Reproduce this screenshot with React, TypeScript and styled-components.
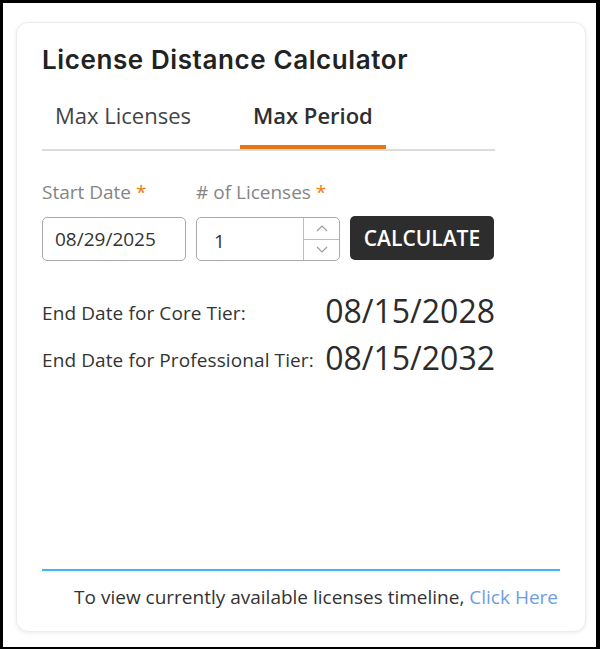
import React from "react";
import styled, { createGlobalStyle } from "styled-components";

const Global = createGlobalStyle`
  html, body { margin: 0; padding: 0; background: #fff; }
  body { font-family: "Open Sans", "Noto Sans", sans-serif; }
  * { box-sizing: border-box; }
`;

const Frame = styled.div`
  width: 600px;
  height: 649px;
  border-style: solid;
  border-color: #000;
  border-width: 3px 4px 2px 3px;
  background: #fff;
  padding: 19px 0 0 13px;
`;

const Card = styled.div`
  width: 570px;
  height: 610px;
  border: 1px solid #ececec;
  border-radius: 12px;
  box-shadow: 0 1px 4px rgba(0, 0, 0, 0.08);
  background: #fff;
  padding: 0 25px 22px 25px;
  display: flex;
  flex-direction: column;
`;

const Title = styled.h1`
  margin: 22px 0 0 0;
  font-family: Inter, "Open Sans", sans-serif;
  font-weight: 600;
  font-size: 26px;
  line-height: 30px;
  color: #222;
  letter-spacing: 0.6px;
`;

const Main = styled.div`
  width: 453px;
  display: flex;
  flex-direction: column;
`;

const TabStrip = styled.div`
  margin-top: 15px;
  display: flex;
  gap: 36px;
  border-bottom: 2px solid #dcdcdc;
`;

const Tab = styled.div<{ $active?: boolean }>`
  padding: 10px 13px 15px;
  font-size: 22px;
  line-height: 30px;
  font-weight: ${(p) => (p.$active ? 600 : 400)};
  color: ${(p) => (p.$active ? "#2e2e2e" : "#444")};
  border-bottom: 4px solid ${(p) => (p.$active ? "#ea7510" : "transparent")};
`;

const FieldRow = styled.div`
  margin-top: 29px;
  display: flex;
  gap: 10px;
  align-items: flex-end;
`;

const Field = styled.div`
  display: flex;
  flex-direction: column;
  gap: 13px;
`;

const Label = styled.label`
  font-size: 19px;
  line-height: 24px;
  color: #858585;
  white-space: nowrap;
`;

const Req = styled.span`
  color: #f07a12;
`;

const DateInput = styled.div`
  width: 144px;
  height: 44px;
  border: 1px solid #a9a9a9;
  border-radius: 5px;
  display: flex;
  align-items: center;
  padding-left: 12px;
  font-size: 19px;
  color: #333;
`;

const NumberBox = styled.div`
  width: 144px;
  height: 44px;
  border: 1px solid #a9a9a9;
  border-radius: 5px;
  display: flex;
`;

const NumberValue = styled.div`
  flex: 1;
  display: flex;
  align-items: center;
  padding: 4px 0 0 17px;
  font-size: 19px;
  color: #333;
`;

const Spinner = styled.div`
  width: 36px;
  border-left: 1px solid #bdbdbd;
  display: flex;
  flex-direction: column;
`;

const SpinBtn = styled.div<{ $top?: boolean }>`
  flex: 1;
  display: flex;
  align-items: center;
  justify-content: center;
  border-bottom: ${(p) => (p.$top ? "1px solid #bdbdbd" : "none")};
`;

const CalcButton = styled.button`
  width: 144px;
  height: 44px;
  margin-bottom: 1px;
  border: none;
  border-radius: 5px;
  background: #2d2d2d;
  color: #fff;
  font-family: "Open Sans", sans-serif;
  font-size: 21px;
  font-weight: 600;
  padding: 0;
`;

const Results = styled.div`
  margin-top: 30px;
  display: grid;
  grid-template-columns: auto 1fr;
  row-gap: 7px;
  align-items: center;
`;

const ResLabel = styled.div`
  font-size: 19px;
  color: #333;
  padding-top: 4px;
  letter-spacing: 0.1px;
`;

const ResValue = styled.div`
  font-size: 32px;
  line-height: 40px;
  color: #2b2b2b;
  text-align: right;
`;

const Footer = styled.div`
  margin-top: auto;
  border-top: 2px solid #3db8f3;
  padding-top: 14px;
  text-align: right;
  font-size: 19px;
  line-height: 24px;
  color: #333;
  padding-right: 2px;
`;

const Link = styled.a`
  color: #6f9ce8;
  text-decoration: none;
`;

const Chevron = ({ up }: { up?: boolean }) => (
  <svg width="12" height="8" viewBox="0 0 12 8" fill="none">
    <path
      d={up ? "M1 7 L6 2 L11 7" : "M1 1 L6 6 L11 1"}
      stroke="#9a9a9a"
      strokeWidth="1.2"
    />
  </svg>
);

export default function App() {
  return (
    <>
      <Global />
      <Frame>
        <Card>
          <Title>License Distance Calculator</Title>
          <Main>
            <TabStrip>
              <Tab>Max Licenses</Tab>
              <Tab $active>Max Period</Tab>
            </TabStrip>
            <FieldRow>
              <Field>
                <Label>
                  Start Date <Req>*</Req>
                </Label>
                <DateInput>08/29/2025</DateInput>
              </Field>
              <Field>
                <Label>
                  # of Licenses <Req>*</Req>
                </Label>
                <NumberBox>
                  <NumberValue>1</NumberValue>
                  <Spinner>
                    <SpinBtn $top>
                      <Chevron up />
                    </SpinBtn>
                    <SpinBtn>
                      <Chevron />
                    </SpinBtn>
                  </Spinner>
                </NumberBox>
              </Field>
              <CalcButton>CALCULATE</CalcButton>
            </FieldRow>
            <Results>
              <ResLabel>End Date for Core Tier:</ResLabel>
              <ResValue>08/15/2028</ResValue>
              <ResLabel>End Date for Professional Tier:</ResLabel>
              <ResValue>08/15/2032</ResValue>
            </Results>
          </Main>
          <Footer>
            To view currently available licenses timeline, <Link>Click Here</Link>
          </Footer>
        </Card>
      </Frame>
    </>
  );
}
